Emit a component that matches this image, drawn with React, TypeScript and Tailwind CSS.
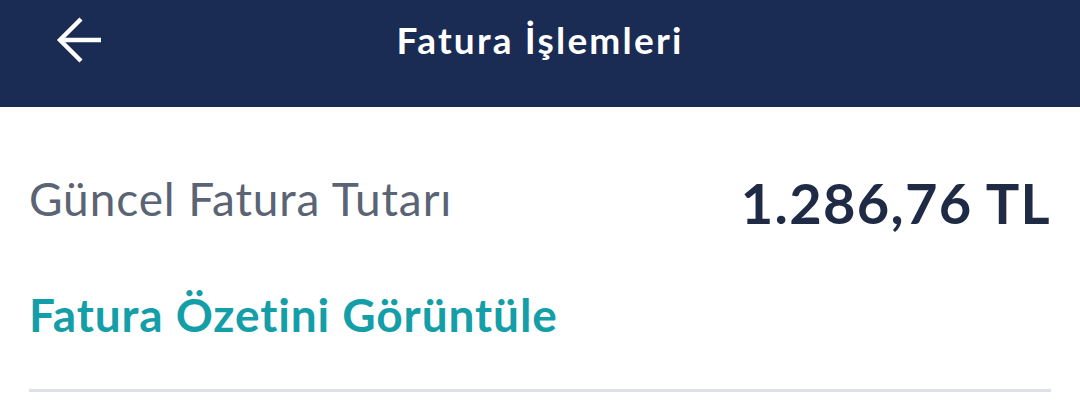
export default function App() {
  return (
    <div className="w-[1080px] h-[401px] bg-white overflow-hidden" style={{ fontFamily: 'Lato, "Noto Sans", sans-serif' }}>
      <header className="h-[107px] bg-[#1a2b54] relative flex items-start justify-center pt-[16px]">
        <button type="button" className="absolute left-[55px] top-[16px] w-[48px] h-[48px] flex items-center justify-center">
          <svg width="48" height="48" viewBox="0 0 48 48" fill="none" stroke="white" strokeWidth="4.4" strokeLinecap="butt" strokeLinejoin="miter">
            <path d="M5 24h41" />
            <path d="M26 3L5 24l21 21" />
          </svg>
        </button>
        <h1 className="text-white text-[37px] font-bold leading-[48px] tracking-[2.2px]">Fatura İşlemleri</h1>
      </header>
      <main className="px-[29px]">
        <div className="flex justify-between items-start pt-[64px]">
          <span className="text-[#5a6474] text-[46px] leading-[56px] tracking-[0.9px]">Güncel Fatura Tutarı</span>
          <span className="text-[#1f2a44] text-[56px] font-bold leading-[64px] tracking-[1.3px]">1.286,76 TL</span>
        </div>
        <a className="block text-[#139ea8] text-[46px] font-bold leading-[56px] tracking-[0.9px] mt-[52px]">Fatura Özetini Görüntüle</a>
        <hr className="border-0 h-[3px] bg-[#dde2ea] mt-[46px]" />
      </main>
    </div>
  );
}
